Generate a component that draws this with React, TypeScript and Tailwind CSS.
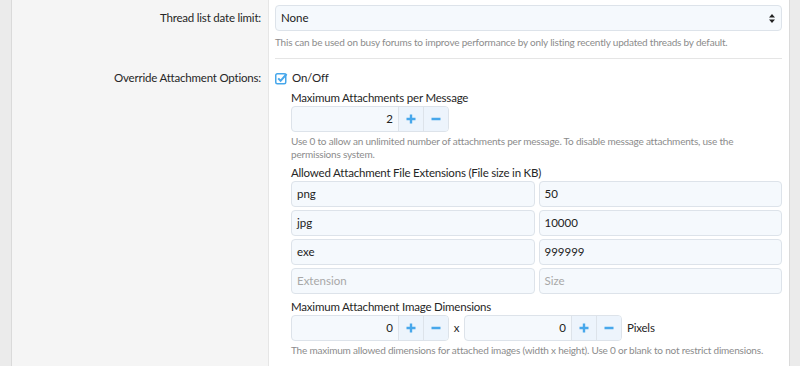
import React from 'react'

const font = { fontFamily: 'Lato, "Open Sans", sans-serif' }

function Plus() {
  return (
    <svg width="10" height="10" viewBox="0 0 10 10">
      <path d="M5 0.5v9M0.5 5h9" stroke="#47a7eb" strokeWidth="2.4" />
    </svg>
  )
}

function Minus() {
  return (
    <svg width="10" height="10" viewBox="0 0 10 10">
      <path d="M0.5 5h9" stroke="#47a7eb" strokeWidth="2.4" />
    </svg>
  )
}

function NumberBox({ value }: { value: string }) {
  return (
    <div className="flex h-[26px] w-[158px] rounded-[4px] border border-[#dde3ea] bg-[#f5f9fd] overflow-hidden">
      <div className="flex-1 text-right pr-[5px] text-[11.5px] leading-[24px] text-[#222]">{value}</div>
      <button className="w-[25px] flex items-center justify-center border-l border-[#dde3ea] bg-[#edf4fc]"><Plus /></button>
      <button className="w-[25px] flex items-center justify-center border-l border-[#dde3ea] bg-[#edf4fc]"><Minus /></button>
    </div>
  )
}

function TextBox({ value, placeholder }: { value?: string; placeholder?: string }) {
  return (
    <div className="h-[26px] min-w-0 flex-1 rounded-[4px] border border-[#dde3ea] bg-[#f5f9fd] px-[5px] text-[11.5px] leading-[24px]">
      {value ? <span className="text-[#222]">{value}</span> : <span className="text-[#a8a8a8]">{placeholder}</span>}
    </div>
  )
}

const label = 'text-[11.5px] tracking-[-0.2px] text-[#262626]'
const hint = 'text-[10px] tracking-[-0.2px] text-[#8c8c8c]'

export default function App() {
  const exts = [
    ['png', '50'],
    ['jpg', '10000'],
    ['exe', '999999'],
  ]
  return (
    <div style={font} className="flex h-[366px] w-[800px] overflow-hidden bg-[#ebebeb] pl-[11px] pr-[10px]">
      <div className="min-w-0 flex-1 border-l border-r border-[#dadada] bg-white">
        {/* thread list date limit */}
        <div className="flex">
          <div className={`w-[257px] shrink-0 bg-[#f5f5f5] border-r border-[#e6e6e6] pr-[7px] pt-[8px] text-right leading-[20px] ${label}`}>
            Thread list date limit:
          </div>
          <div className="min-w-0 flex-1 pl-[6px] pr-[7px]">
            <div className="pt-[5px] pb-[8px] border-b border-[#e5e5e5]">
              <div className="flex h-[26px] items-center justify-between rounded-[4px] border border-[#dde3ea] bg-[#f5f9fd] pl-[5px] pr-[6px]">
                <span className="text-[11.5px] text-[#222]">None</span>
                <svg width="6" height="9" viewBox="0 0 6 9">
                  <path d="M3 0L6 3.5H0Z M3 9L6 5.5H0Z" fill="#222" />
                </svg>
              </div>
              <div className={`mt-[3px] leading-[16px] ${hint}`}>
                This can be used on busy forums to improve performance by only listing recently updated threads by default.
              </div>
            </div>
          </div>
        </div>

        {/* attachment options */}
        <div className="flex h-[310px]">
          <div className={`w-[257px] shrink-0 bg-[#f5f5f5] border-r border-[#e6e6e6] pr-[7px] pt-[10px] text-right leading-[18px] ${label}`}>
            Override Attachment Options:
          </div>
          <div className="min-w-0 flex-1 pl-[6px] pr-[7px] pt-[10px]">
            <div className="flex items-center h-[18px] gap-[4px]">
              <svg width="13" height="13" viewBox="0 0 13 13">
                <rect x="0.75" y="1.75" width="10" height="10" rx="1.5" fill="none" stroke="#47a7eb" strokeWidth="1.5" />
                <path d="M3.2 6.4L5.6 8.8L11.6 2" fill="none" stroke="#47a7eb" strokeWidth="2" />
              </svg>
              <span className={label}>On/Off</span>
            </div>
            <div className="pl-[16px]">
              <div className={`mt-[3px] leading-[16px] ${label}`}>Maximum Attachments per Message</div>
              <NumberBox value="2" />
              <div className={`mt-[3px] leading-[13px] pr-[40px] ${hint}`}>
                Use 0 to allow an unlimited number of attachments per message. To disable message attachments, use the permissions system.
              </div>
              <div className={`mt-[4px] leading-[16px] ${label}`}>Allowed Attachment File Extensions (File size in KB)</div>
              <div className="flex flex-col gap-[3px]">
                {exts.map(([e, s]) => (
                  <div key={e} className="flex gap-[4px]">
                    <TextBox value={e} />
                    <TextBox value={s} />
                  </div>
                ))}
                <div className="flex gap-[4px]">
                  <TextBox placeholder="Extension" />
                  <TextBox placeholder="Size" />
                </div>
              </div>
              <div className={`mt-[5px] leading-[16px] ${label}`}>Maximum Attachment Image Dimensions</div>
              <div className="flex items-center">
                <NumberBox value="0" />
                <span className={`w-[15px] text-center ${label}`}>x</span>
                <NumberBox value="0" />
                <span className={`ml-[5px] ${label}`}>Pixels</span>
              </div>
              <div className={`mt-[3px] leading-[13px] ${hint}`}>
                The maximum allowed dimensions for attached images (width x height). Use 0 or blank to not restrict dimensions.
              </div>
            </div>
          </div>
        </div>
      </div>
    </div>
  )
}
